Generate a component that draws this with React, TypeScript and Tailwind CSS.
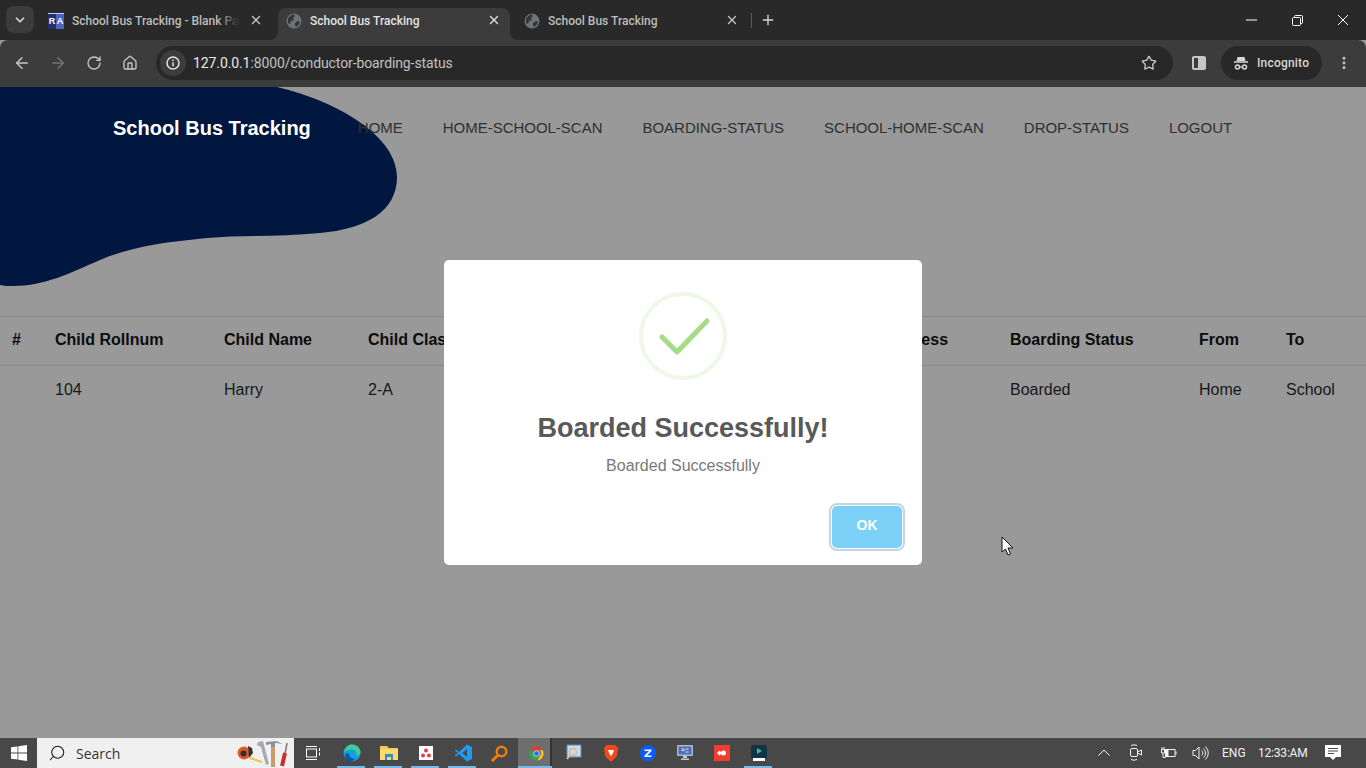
import React from "react";
import { ArrowLeft, ArrowRight, RotateCw, Home, Star, ChevronDown, X, Plus, MoreVertical, Search } from "lucide-react";

const UI = "font-['Roboto',sans-serif]";
const SANS = "font-['Liberation_Sans',Arial,sans-serif]";

function Globe() {
  return (
    <svg width="16" height="16" viewBox="0 0 16 16" className="shrink-0">
      <circle cx="8" cy="8" r="7.5" fill="#6f7276" />
      <path d="M2 5c2-1 3-3 5-4l2 2-2 2 1 2-3 1-1 3-2-1zM9 10l3-2 2 1c-.5 2-2 4-4 5l-1-2z" fill="#33363a" />
    </svg>
  );
}

function Tab({ icon, title, active, fade, width, closeClass }: { icon: React.ReactNode; title: string; active?: boolean; fade?: boolean; width: string; closeClass?: string }) {
  return (
    <div className={`relative h-8 flex items-center pb-[6px] shrink-0 rounded-t-lg ${width} ${active ? "bg-[#3c3c3c]" : ""}`}>
      {active && (
        <>
          <svg width="8" height="8" viewBox="0 0 8 8" className="absolute -left-2 bottom-0"><path d="M8 0v8H0c4.500 0 8-3.500 8-8z" fill="#3c3c3c" /></svg>
          <svg width="8" height="8" viewBox="0 0 8 8" className="absolute -right-2 bottom-0"><path d="M0 0v8h8C3.500 8 0 4.500 0 0z" fill="#3c3c3c" /></svg>
        </>
      )}
      <div className="w-4 ml-2 shrink-0 flex items-center justify-center">{icon}</div>
      <span className={`ml-2 text-[12px] leading-4 whitespace-nowrap font-medium ${active ? "text-[#e3e3e3]" : "text-[#bdbdbd]"}`}>{title}</span>
      {fade && <div className="absolute left-[178px] top-[4px] w-[20px] h-[18px] bg-gradient-to-r from-transparent to-[#292929]" />}
      <X size={14} strokeWidth={2.2} className={`absolute top-[5px] ${closeClass ?? "right-[9px] text-[#c7c7c7]"}`} />
    </div>
  );
}

function TaskIcon({ children, on, active, shift }: { children: React.ReactNode; on?: boolean; active?: boolean; shift?: boolean }) {
  return (
    <div className={`relative w-[37px] h-[30px] flex items-center justify-center shrink-0 ${shift ? "-translate-x-[2px]" : ""}`}>
      {active && <div className="absolute inset-y-0 left-0 right-[5px] bg-[#6e6e6e]" />}
      <div className="relative flex">{children}</div>
      {on && <div className={`absolute bottom-0 h-[2px] bg-[#76b9ed] ${active ? "left-0 right-[3px]" : "left-[4px] right-[5px]"}`} />}
    </div>
  );
}

const nav = ["HOME", "HOME-SCHOOL-SCAN", "BOARDING-STATUS", "SCHOOL-HOME-SCAN", "DROP-STATUS", "LOGOUT"];

export default function App() {
  return (
    <div className={`w-[1366px] h-[768px] overflow-hidden flex flex-col bg-[#999999] ${UI}`}>
      {/* Tab strip */}
      <div className="h-10 bg-[#292929] flex items-end shrink-0 relative">
        <div className="absolute left-[6px] top-[6px] w-[28px] h-[27px] rounded-lg bg-[#3c3c3c] flex items-center justify-center">
          <ChevronDown size={14} strokeWidth={3} className="text-[#d6d6d6]" />
        </div>
        <div className="flex items-end pl-[40px] h-8">
          <Tab
            width="w-[230px]"
            fade
            closeClass="right-[7px] text-[#c7c7c7]"
            title="School Bus Tracking - Blank Pa"
            icon={
              <div className={`w-4 h-4 flex text-white text-[9px] font-bold leading-[14px] border-t border-[#c8d0f0] ${SANS}`}>
                <span className="w-[8px] bg-[#24306e] text-center">R</span>
                <span className="w-[8px] bg-[#4a63c8] text-center">A</span>
              </div>
            }
          />
          <div className="ml-[8px]">
            <Tab active width="w-[232px]" title="School Bus Tracking" icon={<Globe />} closeClass="right-[9px] text-[#e3e3e3]" />
          </div>
          <div className="ml-[6px]">
            <Tab width="w-[232px]" title="School Bus Tracking" icon={<Globe />} />
          </div>
          <div className="w-px h-[15px] bg-[#5a5a5a] self-center ml-[3px] mt-[-8px]" />
          <Plus size={16} strokeWidth={2} className="text-[#d8d8d8] ml-[8px] mb-[12px]" />
        </div>
        <div className="ml-auto flex h-full items-center text-white">
          <div className="w-[46px] flex justify-center">
            <svg width="11" height="2" viewBox="0 0 11 2"><path d="M0 1h11" stroke="#fff" strokeWidth="1" /></svg>
          </div>
          <div className="w-[46px] flex justify-center">
            <svg width="11" height="11" viewBox="0 0 11 11" fill="none" stroke="#fff" strokeWidth="1"><rect x="0.500" y="2.500" width="8" height="8" rx="1" /><path d="M2.500 2.500V1.500a1 1 0 0 1 1-1h6a1 1 0 0 1 1 1v6a1 1 0 0 1-1 1h-1" /></svg>
          </div>
          <div className="w-[46px] flex justify-center">
            <svg width="12" height="12" viewBox="0 0 12 12" fill="none" stroke="#fff" strokeWidth="1"><path d="M1 1l10 10M11 1L1 11" /></svg>
          </div>
        </div>
      </div>

      {/* Toolbar */}
      <div className="h-[47px] bg-[#3c3c3c] flex items-center shrink-0 pl-[13px] pr-[13px] pb-px rounded-t-lg">
        <ArrowLeft size={18} strokeWidth={2} className="text-[#c7c7c7]" />
        <ArrowRight size={18} strokeWidth={2} className="text-[#757575] ml-[18px]" />
        <RotateCw size={16} strokeWidth={2} className="text-[#c7c7c7] ml-[19px]" />
        <Home size={16} strokeWidth={2} className="text-[#c7c7c7] ml-[20px]" />
        <div className="ml-[18px] w-[1017px] h-[34px] rounded-full bg-[#282828] flex items-center">
          <div className="ml-[4px] w-[26px] h-[26px] rounded-full bg-[#3c3c3c] flex items-center justify-center">
            <svg width="14" height="14" viewBox="0 0 14 14" fill="none" stroke="#e3e3e3" strokeWidth="1.500"><circle cx="7" cy="7" r="6" /><path d="M7 6.200v4M7 3.500v1.500" /></svg>
          </div>
          <div className="ml-[7px] text-[14px] leading-5 tracking-[-0.1px]">
            <span className="text-[#e8e8e8]">127.0.0.1</span><span className="text-[#c0c0c0]">:8000/conductor-boarding-status</span>
          </div>
          <Star size={16} strokeWidth={2} className="ml-auto mr-[16px] text-[#c7c7c7]" />
        </div>
        <div className="ml-[19px] w-[14px] h-[14px] rounded-[2px] border-2 border-[#c7c7c7] flex justify-end">
          <div className="w-[6px] h-full bg-[#c7c7c7]" />
        </div>
        <div className="ml-[15px] w-[101px] h-[34px] rounded-full bg-[#282828] flex items-center pl-[12px]">
          <svg width="16" height="16" viewBox="0 0 16 16" fill="none">
            <path d="M4.500 2h7l1 4h-9z" fill="#d6d6d6" />
            <path d="M1 7h14" stroke="#d6d6d6" strokeWidth="1.500" />
            <circle cx="4.500" cy="12" r="2" stroke="#d6d6d6" strokeWidth="1.500" />
            <circle cx="11.500" cy="12" r="2" stroke="#d6d6d6" strokeWidth="1.500" />
            <path d="M6.500 12h3" stroke="#d6d6d6" strokeWidth="1.200" />
          </svg>
          <span className="ml-[8px] text-[12px] font-medium tracking-[0.2px] text-[#d6d6d6]">Incognito</span>
        </div>
        <MoreVertical size={16} strokeWidth={2.400} className="ml-[14px] text-[#c7c7c7]" />
      </div>

      {/* Page */}
      <main className={`relative flex-1 bg-[#999999] overflow-hidden ${SANS}`}>
        <svg width="400" height="202" viewBox="0 0 400 202" className="absolute left-0 top-0">
          <path d="M0 0H277C340 15 397 50 397 90C397 125 365 142 320 146C280 150 240 148 207 151C165 155 130 160 100 173C70 186 45 199 13 199C8 199 4 199 0 198Z" fill="#02173f" />
        </svg>
        <div className="relative flex pl-[113px] pt-[28px] h-[229px] items-start">
          <div className="text-[20px] leading-[26px] font-bold text-white">School Bus Tracking</div>
          <nav className="flex gap-[40px] ml-[47px] text-[15px] leading-[26px] tracking-[-0.02px] text-[#303030]">
            {nav.map((n) => <span key={n}>{n}</span>)}
          </nav>
        </div>
        <table className="w-full table-fixed border-collapse text-[16px] text-left">
          <colgroup>
            <col className="w-[43px]" /><col className="w-[169px]" /><col className="w-[144px]" /><col className="w-[516px]" /><col className="w-[126px]" /><col className="w-[189px]" /><col className="w-[87px]" /><col />
          </colgroup>
          <thead>
            <tr className="h-[49px] border-y border-[#85888a] text-[#0c0c0c]">
              {["#", "Child Rollnum", "Child Name", "Child Class", "Address", "Boarding Status", "From", "To"].map((h) => (
                <th key={h} className="px-[12px] pb-[2px] font-bold">{h}</th>
              ))}
            </tr>
          </thead>
          <tbody>
            <tr className="h-[48px] text-[#16181a]">
              {["", "104", "Harry", "2-A", "", "Boarded", "Home", "School"].map((c, i) => (
                <td key={i} className="px-[12px]">{c}</td>
              ))}
            </tr>
          </tbody>
        </table>

        {/* Modal */}
        <div className="absolute left-[444px] top-[173px] w-[478px] h-[305px] bg-white rounded-[5px] flex flex-col items-center">
          <svg width="90" height="90" viewBox="0 0 90 90" className="mt-[31px] shrink-0">
            <circle cx="45" cy="45" r="42" fill="none" stroke="#edf8e7" strokeWidth="4" />
            <path d="M24 46L39 61L69 30" fill="none" stroke="#a5dc86" strokeWidth="5" strokeLinecap="round" strokeLinejoin="round" />
          </svg>
          <h2 className="mt-[31px] text-[27px] leading-[32px] font-bold text-[#595959]">Boarded Successfully!</h2>
          <p className="mt-[12px] text-[16px] leading-[20px] text-[#797979]">Boarded Successfully</p>
          <div className="self-end mr-[20px] mt-[30px] w-[70px] h-[42px] pb-[3px] rounded-[5px] bg-[#7cd1f9] shadow-[0_0_0_1px_#fff,0_0_0_3px_#c1d6e5] flex items-center justify-center text-[14px] font-bold text-white">OK</div>
        </div>

        {/* Cursor */}
        <svg width="14" height="20" viewBox="0 0 14 20" className="absolute left-[1001px] top-[449px]">
          <path d="M1 1V16L4.500 13L7 19L9.500 18L7 12H12Z" fill="#fff" stroke="#111" strokeWidth="1" />
        </svg>
      </main>

      {/* Taskbar */}
      <footer className="h-[30px] bg-[#484848] flex items-center shrink-0 relative">
        <div className="w-[37px] flex justify-center">
          <svg width="16" height="16" viewBox="0 0 16 16" fill="#fff"><path d="M0 2.300l6.500-.9v6.200H0zM7.300 1.300L16 0v7.600H7.300zM0 8.400h6.500v6.200L0 13.700zM7.300 8.400H16V16l-8.700-1.200z" /></svg>
        </div>
        <div className="w-[257px] h-[30px] bg-[#f0f0f0] flex items-center pl-[11px] relative shrink-0">
          <Search size={18} strokeWidth={1.400} className="text-[#1a1a1a] -scale-x-100" />
          <span className="ml-[10px] text-[14px] text-[#333] font-['Open_Sans',sans-serif]">Search</span>
          <svg width="56" height="30" viewBox="0 0 56 30" className="absolute left-[199px] top-0">
            <circle cx="8" cy="15" r="6.500" fill="#e2582c" /><circle cx="7.500" cy="15.500" r="3" fill="#2f2f2f" />
            <path d="M12 8l4 2 1 5-4 5z" fill="#333" />
            <path d="M14 20l12 4" stroke="#e8c63a" strokeWidth="2" />
            <path d="M22 4l5-1 1 4 5 19-3 1-5-18-4-2z" fill="#a4a9ae" />
            <path d="M30 4l10-1 7 3-7-1h-1v23h-4V6l-5 1z" fill="#8d9297" />
            <rect x="35" y="9" width="4" height="20" fill="#c99b6c" />
            <path d="M51 5l-2 11" stroke="#777" strokeWidth="1.500" />
            <path d="M49 15l-3 13" stroke="#c8302a" strokeWidth="4" />
          </svg>
        </div>
        <div className="flex items-center ml-[2px]">
          <TaskIcon shift>
            <svg width="16" height="14" viewBox="0 0 16 14" fill="none" stroke="#fff" strokeWidth="1"><rect x="1.500" y="3" width="10" height="8" /><path d="M1 .5h11M1 13.500h11M14.500 2v3M14.500 6.500v3" /></svg>
          </TaskIcon>
          <TaskIcon on>
            <svg width="18" height="18" viewBox="0 0 18 18"><circle cx="9" cy="9" r="8.500" fill="#1b9de2" /><path d="M1 8C2 3 6 .5 9 .5c4.500 0 8.500 3.500 8.500 8 0 2.500-3 3-4.500 2 1-2-1-5-4.500-5S2 7 1 8z" fill="#3fce8e" /><path d="M6 10c0 3 3 5 6 4.500-1 2-3 3-5 3C4 17 2 14 2 11c1-2 3-3 4-1z" fill="#0c59a4" /></svg>
          </TaskIcon>
          <TaskIcon on>
            <svg width="18" height="16" viewBox="0 0 18 16"><path d="M0 1h7l2 2h9v12H0z" fill="#f4c84b" /><rect y="4" width="18" height="11" fill="#fbd96b" /><path d="M5 9h8v6h-2v-3H7v3H5z" fill="#2b8fd8" /></svg>
          </TaskIcon>
          <TaskIcon on>
            <svg width="14" height="14" viewBox="0 0 14 14"><rect width="14" height="14" fill="#fff" /><circle cx="7" cy="4.500" r="2" fill="#e0424a" /><circle cx="4" cy="9.500" r="2" fill="#e0424a" /><circle cx="10" cy="9.500" r="2" fill="#e0424a" /></svg>
          </TaskIcon>
          <TaskIcon on>
            <svg width="18" height="18" viewBox="0 0 18 18"><path d="M13 .5L18 3v12l-5 2.500L5 10l-3 2.500L.5 11.500 4 9 .5 6.500 2 5.500 5 8zM13 5L8.500 9 13 13z" fill="#1f9cf0" /></svg>
          </TaskIcon>
          <TaskIcon>
            <svg width="17" height="17" viewBox="0 0 17 17" fill="none"><circle cx="10.500" cy="6.500" r="4.800" stroke="#f07c12" strokeWidth="2.400" /><path d="M6.800 10.200L1.800 15.200" stroke="#f07c12" strokeWidth="3" strokeLinecap="round" /></svg>
          </TaskIcon>
          <TaskIcon on active>
            <svg width="17" height="17" viewBox="0 0 48 48"><path d="M24 4a20 20 0 0 1 17.300 10H24a10 10 0 0 0-9.500 7L7.300 12.500A20 20 0 0 1 24 4z" fill="#e33b2e" /><path d="M41.300 14A20 20 0 0 1 26 44l8.600-15a10 10 0 0 0-2-15z" fill="#fbc116" /><path d="M7.300 12.500L16 27.500a10 10 0 0 0 11 6.500L22 43.900A20 20 0 0 1 7.300 12.500z" fill="#2da94f" /><circle cx="24" cy="24" r="8" fill="#1a73e8" stroke="#fff" strokeWidth="2" /></svg>
          </TaskIcon>
          <div className="w-[2px] h-[30px] bg-[#333] ml-[-5px] mr-[3px]" />
          <TaskIcon>
            <svg width="16" height="18" viewBox="0 0 16 18" fill="none"><rect x="1" y="1" width="14" height="12" fill="#cfd8e3" stroke="#4a90d0" /><circle cx="7" cy="8" r="3.500" stroke="#d8b98a" strokeWidth="1.500" /><path d="M4.500 10.500L1 15" stroke="#d8b98a" strokeWidth="2" /></svg>
          </TaskIcon>
          <TaskIcon>
            <svg width="14" height="17" viewBox="0 0 14 17"><path d="M3 0h8l3 3-1 8-6 6-6-6-1-8z" fill="#f0481f" /><path d="M4 5h6L8.500 9 7 11 5.500 9z" fill="#fff" /></svg>
          </TaskIcon>
          <TaskIcon>
            <svg width="16" height="16" viewBox="0 0 16 16"><circle cx="8" cy="8" r="8" fill="#0b5cff" /><path d="M4.500 4.500h7v1.500L7 10.500h4.500V12h-7v-1.500L9 6H4.500z" fill="#fff" /></svg>
          </TaskIcon>
          <TaskIcon>
            <svg width="16" height="16" viewBox="0 0 16 16"><rect width="16" height="11" rx="1" fill="#a9b8d6" /><rect x="1.500" y="1.500" width="13" height="8" fill="#4f6fb0" /><path d="M6 11h4v2H6zM4 13.500h8V15H4z" fill="#c8c8c8" /><path d="M4.500 4h3M4.500 5.500h3M8.500 4h3M8.500 7h3" stroke="#fff" strokeWidth="0.800" /></svg>
          </TaskIcon>
          <TaskIcon>
            <svg width="16" height="16" viewBox="0 0 16 16"><rect width="16" height="16" fill="#f13c32" /><circle cx="9.500" cy="8" r="2.500" fill="#fff" /><path d="M3 8l2.500-2.500L8 8l-2.500 2.500z" fill="#fff" /></svg>
          </TaskIcon>
          <TaskIcon on>
            <svg width="16" height="16" viewBox="0 0 16 16"><rect width="16" height="14" rx="2.500" fill="#143246" /><path d="M6 3l5 3-5 3z" fill="#27c6a8" /><rect x="2" y="13" width="12" height="3" fill="#fff" /></svg>
          </TaskIcon>
        </div>
        <div className="absolute right-0 top-0 h-[30px] text-[#f2f2f2]">
          <div className="absolute left-[-268px] top-[11px]">
            <svg width="12" height="7" viewBox="0 0 12 7" fill="none" stroke="#f2f2f2" strokeWidth="1"><path d="M0.500 6.500L6 1l5.500 5.500" /></svg>
          </div>
          <div className="absolute left-[-237px] top-[6px]">
            <svg width="14" height="18" viewBox="0 0 14 18" fill="none" stroke="#f2f2f2" strokeWidth="1"><rect x="1.500" y="4.500" width="7" height="8" rx="1.500" /><path d="M8.500 8l4-2v5l-4-2M2 1.500q3-1.500 6 0M2 15.500q3 1.500 6 0" /></svg>
          </div>
          <div className="absolute left-[-206px] top-[8px]">
            <svg width="17" height="14" viewBox="0 0 17 14" fill="none" stroke="#f2f2f2" strokeWidth="1"><rect x="5.500" y="3.500" width="9.500" height="7" /><path d="M16 5.500v3M1.500 3.500h3v3.500h-3zM2 1v2.500M4 1v2.500M3 7v4.500h2.500" /><rect x="5.500" y="3.500" width="3" height="7" fill="#f2f2f2" stroke="none" /></svg>
          </div>
          <div className="absolute left-[-174px] top-[7px]">
            <svg width="17" height="16" viewBox="0 0 17 16" fill="none" stroke="#f2f2f2" strokeWidth="1"><path d="M1 5.500h2.500L7 2v12L3.500 10.500H1zM9.500 5.500a3 3 0 0 1 0 5M11.500 3.500a6 6 0 0 1 0 9M13.500 1.500a9 9 0 0 1 0 13" /></svg>
          </div>
          <span className="absolute left-[-144px] top-[7px] text-[12px] leading-4 whitespace-nowrap">ENG</span>
          <span className="absolute left-[-108px] top-[7px] text-[12px] leading-4 tracking-[-0.2px] whitespace-nowrap">12:33:AM</span>
          <div className="absolute left-[-41px] top-[7px]">
            <svg width="16" height="16" viewBox="0 0 16 16"><path d="M0 0h16v12h-5l-3 3-3-3H0z" fill="#fff" /><path d="M3 3.500h10M3 6h10M3 8.500h6" stroke="#484848" strokeWidth="1" /></svg>
          </div>
        </div>
      </footer>
    </div>
  );
}
